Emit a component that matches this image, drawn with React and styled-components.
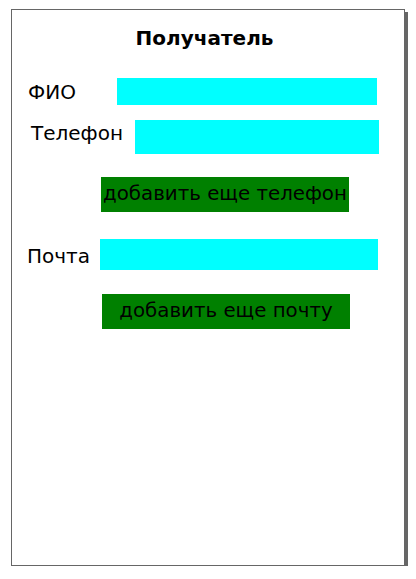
import React from "react";
import styled, { createGlobalStyle } from "styled-components";

const GlobalStyle = createGlobalStyle`
  body {
    margin: 0;
    background: #fff;
    font-family: "DejaVu Sans", Verdana, sans-serif;
  }
`;

const Panel = styled.div`
  box-sizing: border-box;
  margin: 9px 0 0 11px;
  width: 394px;
  height: 557px;
  border: 1px solid #666;
  box-shadow: 3px 3px 0 #666;
  background: #fff;
  display: flex;
  flex-direction: column;
`;

const Title = styled.h1`
  margin: 16px 0 0;
  padding-right: 7px;
  font-size: 20px;
  line-height: 24px;
  font-weight: bold;
  text-align: center;
  color: #000;
`;

const Row = styled.div`
  display: flex;
  align-items: center;
  margin-top: ${(p) => p.$top}px;
  padding-left: ${(p) => p.$indent}px;
`;

const Label = styled.label`
  width: ${(p) => p.$width}px;
  padding: ${(p) => p.$nudge || "0"};
  font-size: 20px;
  color: #000;
`;

const Field = styled.div`
  width: ${(p) => p.$width}px;
  height: ${(p) => p.$height}px;
  background: #00ffff;
`;

const AddButton = styled.button`
  box-sizing: border-box;
  margin: ${(p) => p.$top}px 0 0 ${(p) => p.$left}px;
  width: 248px;
  height: 35px;
  padding: 0 0 2px;
  border: none;
  background: #008000;
  color: #000;
  font-family: "DejaVu Sans", Verdana, sans-serif;
  font-size: 19.8px;
  text-align: center;
  white-space: nowrap;
`;

export default function App() {
  return (
    <>
      <GlobalStyle />
      <Panel>
        <Title>Получатель</Title>
        <Row $top={28} $indent={16}>
          <Label $width={89}>ФИО</Label>
          <Field $width={260} $height={27} />
        </Row>
        <Row $top={15} $indent={19}>
          <Label $width={104} $nudge="0 0 8px">
            Телефон
          </Label>
          <Field $width={244} $height={34} />
        </Row>
        <AddButton $top={23} $left={89}>добавить еще телефон</AddButton>
        <Row $top={27} $indent={15}>
          <Label $width={73} $nudge="2px 0 0">
            Почта
          </Label>
          <Field $width={278} $height={31} />
        </Row>
        <AddButton $top={24} $left={90}>добавить еще почту</AddButton>
      </Panel>
    </>
  );
}
